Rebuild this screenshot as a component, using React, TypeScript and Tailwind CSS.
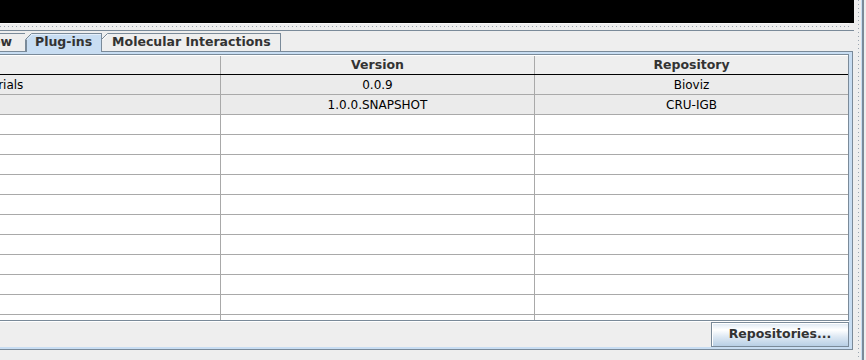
import React from "react";

type Row = { name: string; version: string; repo: string; gray: boolean };

const rows: Row[] = [
  { name: "Tutorials", version: "0.0.9", repo: "Bioviz", gray: true },
  { name: "", version: "1.0.0.SNAPSHOT", repo: "CRU-IGB", gray: true },
  ...Array.from({ length: 11 }, () => ({ name: "", version: "", repo: "", gray: false })),
];

function TabCorner({ bg }: { bg: string }) {
  return (
    <svg className="absolute left-[-1px] top-[-1px]" width="8" height="8" viewBox="0 0 8 8">
      <polygon points="0,0 7,0 0,7" fill="#eeeeee" />
      <line x1="0.5" y1="6.5" x2="6.5" y2="0.5" stroke="#7a8a99" strokeWidth="1" />
      <line x1="1.5" y1="7" x2="7" y2="1.5" stroke={bg} strokeWidth="1" />
    </svg>
  );
}

export default function App() {
  return (
    <div className="w-[866px] h-[360px] overflow-hidden bg-[#eeeeee] flex font-['DejaVu_Sans',sans-serif]">
      {/* left component */}
      <div className="w-[854px] flex flex-col shrink-0">
        <div className="h-[23px] w-[854px] bg-black" />
        <div className="h-[7px] flex flex-col">
          <div className="h-[1px] w-[849px] bg-[#f8f8f8]" />
          <div className="h-[2px]" />
          <div className="h-[1px] w-[849px] bg-[repeating-linear-gradient(to_right,#9aa5b0_0px,#9aa5b0_1px,transparent_1px,transparent_4px)]" />
        </div>
        <div className="h-[1px] w-[854px] bg-[#7a8a99]" />
        <div className="h-[2px]" />
        {/* tabs */}
        <div className="w-[853px] h-[19px] border-b border-[#7a8a99] flex items-start text-[12.5px] font-bold text-[#333333] leading-none">
          <div className="w-[26px] h-[18px] border-t border-r border-[#7a8a99] flex justify-end items-center pr-[13px] overflow-hidden whitespace-nowrap">
            <span>Overview</span>
          </div>
          <div className="relative z-10 h-[19px] -mb-px border-t border-r border-l-0 border-[#7a8a99] bg-[#c8ddf2] flex items-center pl-[9px] pr-[9px] whitespace-nowrap shadow-[inset_1px_1px_0_#e4eefa]">
            <div className="absolute left-0 top-0 bottom-0 w-px bg-[#7a8a99]" />
            <TabCorner bg="#e4eefa" />
            <span className="pb-[1px]">Plug-ins</span>
          </div>
          <div className="relative h-[18px] border-t border-r border-l-0 border-[#7a8a99] bg-[#eeeeee] flex items-center pl-[10px] pr-[9px] whitespace-nowrap">
            <TabCorner bg="#ffffff" />
            <span>Molecular Interactions</span>
          </div>
        </div>
        {/* tab content */}
        <div className="w-[853px] h-[298px] border-r border-b border-[#7a8a99] bg-[#c8ddf2] pt-[2px] pr-[3px] pb-[2px] flex flex-col">
          <div className="flex-1 flex flex-col bg-[#eeeeee]">
            {/* scroll pane */}
            <div className="h-[267px] border-t border-b border-r border-[#7a8a99] flex flex-col bg-white">
              {/* header */}
              <div className="h-[20px] flex border-b border-black border-t border-t-white bg-[#eeeeee] text-[12.5px] font-bold text-[#333333] leading-none">
                <div className="w-[221px] border-r border-[#a9a9a9]" />
                <div className="w-[314px] border-r border-[#a9a9a9] flex items-center justify-center pt-[1px]">Version</div>
                <div className="flex-1 flex items-center justify-center pt-[1px]">Repository</div>
              </div>
              {/* rows */}
              <div className="h-[245px] overflow-hidden text-[12px] text-black leading-none">
                {rows.map((r, i) => (
                  <div key={i} className={`h-[20px] flex border-b border-[#a9a9a9] ${r.gray ? "bg-[#ebebeb]" : "bg-white"}`}>
                    <div className="w-[221px] border-r border-[#a9a9a9] flex items-center overflow-hidden whitespace-nowrap">
                      <span className="-ml-[27px]">{r.name}</span>
                    </div>
                    <div className="w-[314px] border-r border-[#a9a9a9] flex items-center justify-center whitespace-nowrap">{r.version}</div>
                    <div className="flex-1 flex items-center justify-center whitespace-nowrap">{r.repo}</div>
                  </div>
                ))}
              </div>
            </div>
            {/* bottom panel */}
            <div className="h-[26px] flex justify-end items-start border-t border-t-white">
              <button className="w-[138px] h-[25px] border border-[#7a8a99] bg-[linear-gradient(to_bottom,#dde8f3_0%,#ffffff_30%,#dde8f3_60%,#b8cfe5_100%)] shadow-[inset_1px_1px_0_#ffffff] text-[12.5px] font-bold text-[#333333] leading-none flex items-center justify-center">
                Repositories...
              </button>
            </div>
          </div>
        </div>
      </div>
      {/* right divider strip */}
      <div className="w-[12px] flex shrink-0">
        <div className="w-[4px]" />
        <div className="w-[1px] bg-[repeating-linear-gradient(to_bottom,#9aa5b0_0px,#9aa5b0_1px,transparent_1px,transparent_4px)]" />
        <div className="w-[2px]" />
        <div className="w-[1px] bg-[#c8ddf2]" />
        <div className="w-[2px] bg-[#7a8a99]" />
        <div className="w-[2px]" />
      </div>
    </div>
  );
}
